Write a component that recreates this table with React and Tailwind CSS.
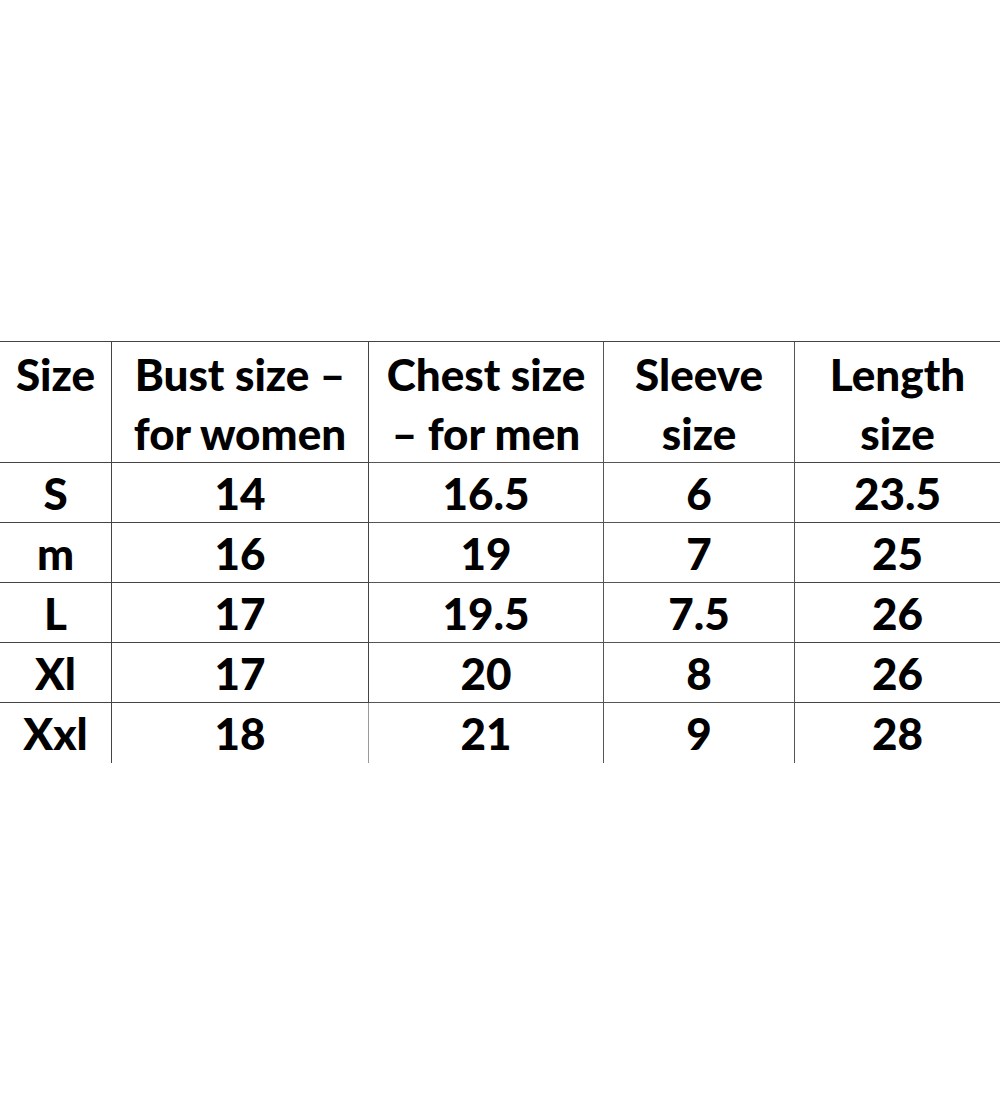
import React from 'react';

const HEAD = [
  ['Size'],
  ['Bust size –', 'for women'],
  ['Chest size', '– for men'],
  ['Sleeve', 'size'],
  ['Length', 'size'],
];

const ROWS = [
  ['S', '14', '16.5', '6', '23.5'],
  ['m', '16', '19', '7', '25'],
  ['L', '17', '19.5', '7.5', '26'],
  ['Xl', '17', '20', '8', '26'],
  ['Xxl', '18', '21', '9', '28'],
];

const colBorder = [
  'border-r border-[#444]',
  'border-r border-[#9a9a9a]',
  'border-r border-[#555]',
  'border-r border-[#555]',
  '',
];

export default function App() {
  return (
    <div className="w-[1000px] h-[1100px] bg-white pt-[341px] font-['Lato',sans-serif] font-black text-black">
      <div className="grid grid-cols-[112px_257px_235px_191px_205px] border-t border-[#444]">
        {HEAD.map((lines, i) => (
          <div
            key={i}
            className={`h-[121px] border-b border-[#444] pt-[3px] flex flex-col items-center text-[44px] leading-[59px] ${colBorder[i]}`}
          >
            {lines.map((l) => (
              <span key={l} className="whitespace-nowrap">{l}</span>
            ))}
          </div>
        ))}
        {ROWS.map((row, r) =>
          row.map((cell, i) => (
            <div
              key={`${r}-${i}`}
              className={`h-[60px] flex items-center justify-center text-[44px] leading-none ${colBorder[i]} ${r < ROWS.length - 1 ? 'border-b border-[#444]' : ''}`}
            >
              {cell}
            </div>
          ))
        )}
      </div>
    </div>
  );
}
